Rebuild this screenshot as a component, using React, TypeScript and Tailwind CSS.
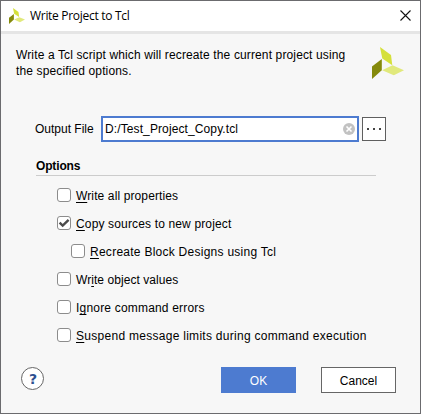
import React from "react";

function Logo({ className }: { className: string }) {
  return (
    <svg viewBox="0 0 32 32" className={className}>
      <path d="M8 0 L19 8 L20.3 18.2 L10.3 11.5Z" fill="#d5e03b" />
      <path d="M0 19.5 L9.8 12 L9.8 23.2 L0 32Z" fill="#858a0c" />
      <path d="M10.2 23.2 L20.5 18.3 L32 23.2 L21.8 28.3Z" fill="#e1e97c" />
    </svg>
  );
}

type OptionProps = {
  before?: string;
  mnemonic: string;
  after: string;
  checked?: boolean;
  indent?: boolean;
  spacing: string;
};

function Option({ before = "", mnemonic, after, checked, indent, spacing }: OptionProps) {
  return (
    <label className={`flex h-7 items-center gap-[5px] ${indent ? "pl-[70px]" : "pl-[56px]"}`}>
      <span className="flex size-[14px] shrink-0 items-center justify-center rounded-[3px] border border-[#8c8c8c] bg-white">
        {checked && (
          <svg viewBox="0 0 12 12" className="size-3 shrink-0">
            <path d="M1.6 5.6 L4.7 8.6 L10.6 2.8" fill="none" stroke="#4b4b4b" strokeWidth="2.4" />
          </svg>
        )}
      </span>
      <span className={`relative top-px whitespace-nowrap leading-4 ${spacing}`}>
        {before}
        <span className="underline decoration-1 underline-offset-[2px]">{mnemonic}</span>
        {after}
      </span>
    </label>
  );
}

export default function App() {
  return (
    <div className="flex h-[414px] w-[421px] flex-col overflow-hidden border border-[#6b6b6e] bg-[#f7f7f7] font-['Liberation_Sans',Arial,sans-serif] text-[12px] text-black">
      <header className="flex h-[30px] shrink-0 items-center bg-white pr-[9px] pl-2">
        <Logo className="mb-px size-4 shrink-0" />
        <h1 className="ml-[5px] flex-1 whitespace-nowrap font-['Open_Sans','Noto_Sans',sans-serif] text-[12px] leading-4 tracking-[-0.3px]">
          Write Project to Tcl
        </h1>
        <svg viewBox="0 0 11 11" className="mb-[2px] size-[11px]">
          <path d="M.5 .5 L10.5 10.5 M10.5 .5 L.5 10.5" stroke="#111" strokeWidth="1.1" />
        </svg>
      </header>
      <div className="h-[3px] shrink-0 bg-[#e5e5e5]" />

      <section className="flex h-[82px] shrink-0 pl-[15px]">
        <p className="w-[356px] pt-[13px] leading-4 tracking-[0.13px]">
          <span className="block whitespace-nowrap">Write a Tcl script which will recreate the current project using</span>
          <span className="block whitespace-nowrap">the specified options.</span>
        </p>
        <Logo className="mt-[13px] size-8 shrink-0" />
      </section>

      <div className="flex h-[26px] shrink-0 items-center pl-[34px]">
        <span className="w-[66px] whitespace-nowrap">Output File</span>
        <div className="flex h-[26px] w-[258px] items-center justify-between border-2 border-[#4d7bd0] bg-white pr-[2px] pl-[2px]">
          <span className="whitespace-nowrap tracking-[0.11px]">D:/Test_Project_Copy.tcl</span>
          <svg viewBox="0 0 12 12" className="size-3">
            <circle cx="6" cy="6" r="6" fill="#c2c2c2" />
            <path d="M3.5 3.5 L8.5 8.5 M8.5 3.5 L3.5 8.5" stroke="#fff" strokeWidth="1.6" />
          </svg>
        </div>
        <button className="ml-[3px] flex size-6 items-center justify-center gap-1 border border-[#5f5f5f] bg-white">
          <i className="size-[2px] bg-[#444]" />
          <i className="size-[2px] bg-[#444]" />
          <i className="size-[2px] bg-[#444]" />
        </button>
      </div>

      <h2 className="mt-4 ml-[35px] h-[18px] w-[340px] shrink-0 border-b border-[#cccccc] font-bold leading-4 tracking-[-0.15px]">
        Options
      </h2>

      <div className="mt-[5px] flex shrink-0 flex-col">
        <Option mnemonic="W" after="rite all properties" spacing="tracking-[0.12px]" />
        <Option mnemonic="C" after="opy sources to new project" checked spacing="tracking-[0.15px]" />
        <Option mnemonic="R" after="ecreate Block Designs using Tcl" indent spacing="tracking-[0.26px]" />
        <Option before="Wr" mnemonic="i" after="te object values" spacing="tracking-[0.06px]" />
        <Option before="I" mnemonic="g" after="nore command errors" spacing="tracking-[0.19px]" />
        <Option mnemonic="S" after="uspend message limits during command execution" spacing="tracking-[0.28px]" />
      </div>

      <footer className="mt-[18px] flex shrink-0 items-start pl-5">
        <button className="flex size-[23px] items-center justify-center rounded-full border border-[#666] bg-white pl-px font-['DejaVu_Sans',sans-serif] text-[14px] leading-none font-bold text-[#2d5091]">
          ?
        </button>
        <button className="ml-[177px] h-[26px] w-[75px] bg-[#4d7bd0] pt-px text-white">OK</button>
        <button className="ml-[25px] h-[26px] w-[75px] border border-[#666] bg-white pt-px">Cancel</button>
      </footer>
    </div>
  );
}
